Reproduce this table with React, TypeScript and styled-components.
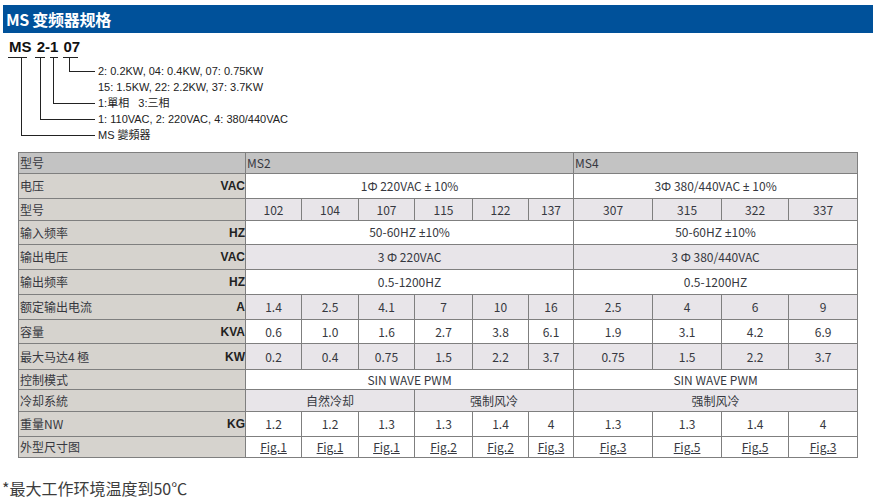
import React from "react";
import styled, { createGlobalStyle } from "styled-components";

const Global = createGlobalStyle`
  html, body { margin: 0; padding: 0; background: #ffffff; }
  body { font-family: "Noto Sans CJK SC", "Noto Sans", sans-serif; }
`;

const Page = styled.div`
  width: 894px;
  height: 501px;
  overflow: hidden;
  padding-top: 5px;
  box-sizing: border-box;
`;

const TitleBar = styled.div`
  margin-left: 3px;
  width: 870px;
  height: 28px;
  background: #00519a;
  color: #ffffff;
  display: flex;
  align-items: center;
  padding-left: 3px;
  box-sizing: border-box;
  font-family: "Noto Sans CJK SC", sans-serif;
  font-weight: 700;
  font-size: 16px;
  letter-spacing: -0.3px;
`;

const Diagram = styled.div`
  position: relative;
  margin-top: 5px;
  height: 105px;
  width: 320px;
`;

const CodeLine = styled.div`
  height: 18px;
  line-height: 18px;
  padding-left: 9px;
  font-family: "Liberation Sans", Arial, sans-serif;
  font-weight: 700;
  font-size: 15px;
  color: #111;
  word-spacing: 1px;
`;

const Notes = styled.div`
  margin-top: 7px;
  padding-left: 98px;
  display: flex;
  flex-direction: column;
`;

const Note = styled.div`
  height: 16px;
  line-height: 16px;
  font-family: "Liberation Sans", Arial, "Noto Sans CJK TC", sans-serif;
  font-size: 11px;
  color: #222;
  white-space: pre;
`;

const Connectors = styled.svg`
  position: absolute;
  left: 0;
  top: 0;
  pointer-events: none;
`;

const SpecTable = styled.table`
  margin-top: 9px;
  margin-left: 18px;
  width: 839px;
  border-collapse: collapse;
  table-layout: fixed;
  font-family: "Noto Sans CJK SC", sans-serif;
  font-size: 12px;
  color: #363840;
`;

const Row = styled.tr<{ $h: number }>`
  height: ${(p) => p.$h}px;
`;

const LabelCell = styled.td<{ $head?: boolean }>`
  border: 1px solid #7f7f7f;
  background: ${(p) => (p.$head ? "#c3c3c3" : "#d6d3ce")};
  padding: 0 0 0 1px;
  line-height: 14px;
`;

const LabelInner = styled.div`
  display: flex;
  justify-content: space-between;
  align-items: center;
`;

const Unit = styled.span`
  font-family: "Liberation Sans", Arial, sans-serif;
  font-weight: 700;
  font-size: 12px;
  color: #222;
`;

const ValueCell = styled.td<{ $bg: string; $left?: boolean }>`
  border: 1px solid #7f7f7f;
  background: ${(p) => p.$bg};
  text-align: ${(p) => (p.$left ? "left" : "center")};
  padding: 0 0 0 ${(p) => (p.$left ? "1px" : "0")};
  line-height: 14px;
  white-space: nowrap;
`;

const Sym = styled.span`
  font-family: "Noto Sans", sans-serif;
`;

const FigLink = styled.a`
  color: #363840;
  text-decoration: underline;
`;

const Footnote = styled.div`
  margin-top: 20px;
  padding-left: 2px;
  font-family: "Noto Sans CJK SC", sans-serif;
  font-size: 16px;
  line-height: 20px;
  color: #3c3c3c;
`;

type Cell = { t: string; span?: number; fig?: boolean };
type RowData = { label: string; unit?: string; h: number; bg: string; cells: Cell[]; head?: boolean };

const WHITE = "#ffffff";
const LIGHT = "#e8e5e9";
const HEAD = "#c3c3c3";

const nums = (arr: string[]): Cell[] => arr.map((t) => ({ t }));

const rows: RowData[] = [
  { label: "型号", h: 21, bg: HEAD, head: true, cells: [{ t: "MS2", span: 6 }, { t: "MS4", span: 4 }] },
  { label: "电压", unit: "VAC", h: 25, bg: WHITE, cells: [{ t: "1Φ 220VAC ± 10%", span: 6 }, { t: "3Φ 380/440VAC ± 10%", span: 4 }] },
  { label: "型号", h: 22, bg: LIGHT, cells: nums(["102", "104", "107", "115", "122", "137", "307", "315", "322", "337"]) },
  { label: "输入频率", unit: "HZ", h: 24, bg: WHITE, cells: [{ t: "50-60HZ ±10%", span: 6 }, { t: "50-60HZ ±10%", span: 4 }] },
  { label: "输出电压", unit: "VAC", h: 25, bg: LIGHT, cells: [{ t: "3 Φ 220VAC", span: 6 }, { t: "3 Φ 380/440VAC", span: 4 }] },
  { label: "输出频率", unit: "HZ", h: 25, bg: WHITE, cells: [{ t: "0.5-1200HZ", span: 6 }, { t: "0.5-1200HZ", span: 4 }] },
  { label: "额定输出电流", unit: "A", h: 25, bg: LIGHT, cells: nums(["1.4", "2.5", "4.1", "7", "10", "16", "2.5", "4", "6", "9"]) },
  { label: "容量", unit: "KVA", h: 24, bg: WHITE, cells: nums(["0.6", "1.0", "1.6", "2.7", "3.8", "6.1", "1.9", "3.1", "4.2", "6.9"]) },
  { label: "最大马达4 極", unit: "KW", h: 26, bg: LIGHT, cells: nums(["0.2", "0.4", "0.75", "1.5", "2.2", "3.7", "0.75", "1.5", "2.2", "3.7"]) },
  { label: "控制模式", h: 20, bg: WHITE, cells: [{ t: "SIN WAVE PWM", span: 6 }, { t: "SIN WAVE PWM", span: 4 }] },
  { label: "冷却系統", h: 22, bg: LIGHT, cells: [{ t: "自然冷却", span: 3 }, { t: "强制风冷", span: 3 }, { t: "强制风冷", span: 4 }] },
  { label: "重量NW", unit: "KG", h: 25, bg: WHITE, cells: nums(["1.2", "1.2", "1.3", "1.3", "1.4", "4", "1.3", "1.3", "1.4", "4"]) },
  {
    label: "外型尺寸图",
    h: 21,
    bg: WHITE,
    cells: ["Fig.1", "Fig.1", "Fig.1", "Fig.2", "Fig.2", "Fig.3", "Fig.3", "Fig.5", "Fig.5", "Fig.3"].map((t) => ({ t, fig: true })),
  },
];

const colWidths = [227, 56, 57, 56, 58, 56, 45, 79, 69, 67, 69];

const notes = [
  "2: 0.2KW, 04: 0.4KW, 07: 0.75KW",
  "15: 1.5KW, 22: 2.2KW, 37: 3.7KW",
  "1:單相   3:三相",
  "1: 110VAC, 2: 220VAC, 4: 380/440VAC",
  "MS 變頻器",
];

function renderText(t: string) {
  const parts = t.split(/([±Φ])/);
  return parts.map((p, i) => (p === "±" || p === "Φ" ? <Sym key={i}>{p}</Sym> : <React.Fragment key={i}>{p}</React.Fragment>));
}

export default function App() {
  return (
    <>
      <Global />
      <Page>
        <TitleBar>MS 变频器规格</TitleBar>
        <Diagram>
          <CodeLine>MS 2-1 07</CodeLine>
          <Notes>
            {notes.map((n, i) => (
              <Note key={i}>{n}</Note>
            ))}
          </Notes>
          <Connectors width="320" height="105" viewBox="0 0 320 105">
            <g stroke="#222" strokeWidth="1" fill="none" shapeRendering="crispEdges">
              <line x1="8" y1="19.5" x2="27" y2="19.5" />
              <line x1="35" y1="19.5" x2="45" y2="19.5" />
              <line x1="50" y1="19.5" x2="58" y2="19.5" />
              <line x1="63" y1="19.5" x2="78" y2="19.5" />
              <polyline points="21.5,19.5 21.5,97.5 95,97.5" />
              <polyline points="40.5,19.5 40.5,81.5 95,81.5" />
              <polyline points="53.5,19.5 53.5,65.5 95,65.5" />
              <polyline points="69.5,19.5 69.5,33.5 95,33.5" />
            </g>
          </Connectors>
        </Diagram>
        <SpecTable>
          <colgroup>
            {colWidths.map((w, i) => (
              <col key={i} style={{ width: w }} />
            ))}
          </colgroup>
          <tbody>
            {rows.map((r, ri) => (
              <Row key={ri} $h={r.h}>
                <LabelCell $head={r.head}>
                  <LabelInner>
                    <span>{r.label}</span>
                    {r.unit && <Unit>{r.unit}</Unit>}
                  </LabelInner>
                </LabelCell>
                {r.cells.map((c, ci) => (
                  <ValueCell key={ci} colSpan={c.span ?? 1} $bg={r.bg} $left={r.head}>
                    {c.fig ? <FigLink href="#">{c.t}</FigLink> : renderText(c.t)}
                  </ValueCell>
                ))}
              </Row>
            ))}
          </tbody>
        </SpecTable>
        <Footnote>*最大工作环境温度到50℃</Footnote>
      </Page>
    </>
  );
}
